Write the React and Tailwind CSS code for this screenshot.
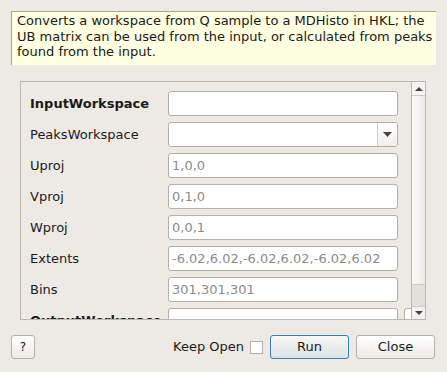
const rows = [
  { label: 'InputWorkspace', bold: true, value: '' },
  { label: 'PeaksWorkspace', combo: true, value: '' },
  { label: 'Uproj', value: '1,0,0' },
  { label: 'Vproj', value: '0,1,0' },
  { label: 'Wproj', value: '0,0,1' },
  { label: 'Extents', value: '-6.02,6.02,-6.02,6.02,-6.02,6.02' },
  { label: 'Bins', value: '301,301,301' },
  { label: 'OutputWorkspace', bold: true, value: '', browse: true },
]

function Field({ row }) {
  return (
    <div className="flex items-center h-[25px] shrink-0">
      <div className={`w-[138px] shrink-0 text-[#1a1a1a] ${row.bold ? 'font-bold' : ''}`}>{row.label}</div>
      <div className="w-[230px] h-[25px] shrink-0 flex border border-[#b2aea8] rounded-[3px] bg-white overflow-hidden">
        <div className="flex-1 flex items-center px-[3px] text-[#8c8c8c]">{row.value}</div>
        {row.combo && (
          <div className="w-[20px] border-l border-[#cfccc7] bg-gradient-to-b from-white to-[#f0eeeb] flex items-center justify-center">
            <svg width="9" height="5" viewBox="0 0 9 5"><path d="M0 0h9L4.5 5z" fill="#444" /></svg>
          </div>
        )}
      </div>
      {row.browse && (
        <div className="ml-[6px] w-[12px] h-[25px] shrink-0 border border-[#b2aea8] rounded-[3px] bg-white" />
      )}
    </div>
  )
}

export default function App() {
  return (
    <div className="w-[447px] h-[372px] bg-[#edeae6] flex flex-col font-['DejaVu_Sans',sans-serif] text-[13px] overflow-hidden">
      {/* description */}
      <div className="mt-[11px] ml-[11px] w-[425px] h-[54px] bg-[#ffffe1] border-t border-l border-[#a7a49f] pl-[5px] pt-[1px] leading-[15.5px] text-[#1a1a1a]">
        Converts a workspace from Q sample to a MDHisto in HKL; the UB matrix can be used from the input, or calculated from peaks found from the input.
      </div>

      {/* properties frame */}
      <div className="mt-[16px] ml-[20px] w-[406px] h-[239px] border border-[#bab6b0] flex">
        <div className="flex-1 overflow-hidden pl-[9px] pt-[9px] flex flex-col gap-[6px]">
          {rows.map((r) => (
            <Field key={r.label} row={r} />
          ))}
        </div>
        <div className="w-[14px] flex flex-col border-l border-[#bab6b0]">
          <div className="h-[14px] flex items-center justify-center border-b border-[#cfccc7] bg-[#f4f3f1]">
            <svg width="8" height="4" viewBox="0 0 8 4"><path d="M0 4h8L4 0z" fill="#444" /></svg>
          </div>
          <div className="flex-1 bg-gradient-to-r from-[#fbfbfa] to-[#eceae7] border-b border-[#cfccc7]" />
          <div className="h-[22px] bg-[#e2e0dd] border-b border-[#cfccc7]" />
          <div className="h-[12px] flex items-center justify-center bg-[#f4f3f1]">
            <svg width="8" height="4" viewBox="0 0 8 4"><path d="M0 0h8L4 4z" fill="#444" /></svg>
          </div>
        </div>
      </div>

      {/* buttons */}
      <div className="mt-[15px] flex items-center h-[24px] pl-[11px] pr-[12px] text-[#1a1a1a]">
        <button className="w-[24px] h-[24px] border border-[#b4b0aa] rounded-[3px] bg-gradient-to-b from-white to-[#ebe9e5] text-[12px]">?</button>
        <div className="flex-1" />
        <span className="mr-[6px]">Keep Open</span>
        <div className="w-[13px] h-[13px] border border-[#b4b0aa] bg-white mr-[7px]" />
        <button className="w-[79px] h-[24px] border border-[#3d7eae] rounded-[3px] bg-gradient-to-b from-[#f7f7f6] to-[#dde1e4]">Run</button>
        <button className="ml-[7px] w-[79px] h-[24px] border border-[#b4b0aa] rounded-[3px] bg-gradient-to-b from-white to-[#ebe9e5]">Close</button>
      </div>
    </div>
  )
}
